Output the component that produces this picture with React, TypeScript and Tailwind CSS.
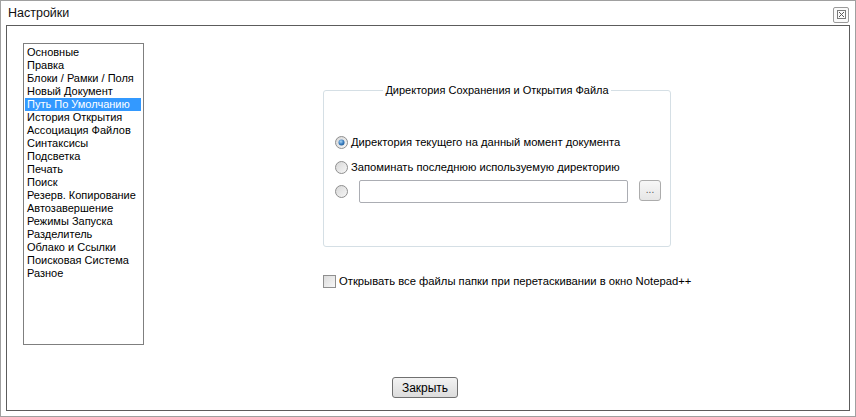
import React from "react";

const items = [
  "Основные",
  "Правка",
  "Блоки / Рамки / Поля",
  "Новый Документ",
  "Путь По Умолчанию",
  "История Открытия",
  "Ассоциация Файлов",
  "Синтаксисы",
  "Подсветка",
  "Печать",
  "Поиск",
  "Резерв. Копирование",
  "Автозавершение",
  "Режимы Запуска",
  "Разделитель",
  "Облако и Ссылки",
  "Поисковая Система",
  "Разное",
];

function Radio({ checked }: { checked?: boolean }) {
  return (
    <svg width="13" height="13" viewBox="0 0 13 13" className="shrink-0">
      <defs>
        <linearGradient id={checked ? "rgc" : "rgu"} x1="0" y1="0" x2="1" y2="1">
          <stop offset="0" stopColor="#d6d6d6" />
          <stop offset="1" stopColor="#f8f8f8" />
        </linearGradient>
        <radialGradient id="dot" cx="0.4" cy="0.35" r="0.7">
          <stop offset="0" stopColor="#a9d6f5" />
          <stop offset="0.6" stopColor="#3b7ec0" />
          <stop offset="1" stopColor="#1d5a96" />
        </radialGradient>
      </defs>
      <circle cx="6.5" cy="6.5" r="6" fill={`url(#${checked ? "rgc" : "rgu"})`} stroke="#8f8f8f" strokeWidth="1" />
      {checked && <circle cx="6.5" cy="6.5" r="3" fill="url(#dot)" />}
    </svg>
  );
}

export default function App() {
  const font = { fontFamily: '"Liberation Sans", Arial, sans-serif' };
  return (
    <div
      className="w-[856px] h-[417px] border border-[#a0a0a0] bg-white flex flex-col px-[5px] pb-[5px] text-black overflow-hidden"
      style={font}
    >
      {/* title bar */}
      <div className="h-[24px] flex items-center justify-between pl-[2px] shrink-0">
        <span className="text-[12.5px] leading-none mt-[1px] text-[#111]">Настройки</span>
        <div className="w-[16px] h-[16px] mt-[3px] mr-[1px] border border-[#9a9a9a] rounded-[2px] flex items-center justify-center bg-[#fafafa]">
          <svg width="9" height="9" viewBox="0 0 9 9">
            <rect x="0.5" y="0.5" width="8" height="8" fill="none" stroke="#7a7a7a" strokeWidth="1" />
            <path d="M2 2 L7 7 M7 2 L2 7" stroke="#5a5a5a" strokeWidth="1" />
          </svg>
        </div>
      </div>

      {/* content */}
      <div className="flex-1 border border-[#5c5c5c] bg-white flex flex-col">
        <div className="flex">
          {/* list box */}
          <div className="ml-[16px] mt-[17px] w-[121px] h-[302px] border border-[#7f7f7f] pt-[2px] px-[1px] shrink-0">
            {items.map((it, i) => (
              <div
                key={it}
                className={
                  "h-[13px] leading-[13px] text-[11px] pl-[2px] mr-[1px] whitespace-nowrap " +
                  (i === 4 ? "bg-[#3399ff] text-white" : "")
                }
              >
                {it}
              </div>
            ))}
          </div>

          {/* right column */}
          <div className="ml-[179px] flex flex-col">
            <div className="mt-[64px] w-[348px] h-[157px] border border-[#d5dfe5] rounded-[3px] relative">
              <div className="absolute -top-[8px] left-0 right-0 flex justify-center">
                <span className="bg-white px-[2px] text-[11px] leading-[14px]">
                  Директория Сохранения и Открытия Файла
                </span>
              </div>
              <div className="pt-[45px] pl-[11px] flex flex-col">
                <div className="flex items-center h-[13px] gap-[3px]">
                  <Radio checked />
                  <span className="text-[11.2px] leading-none">Директория текущего на данный момент документа</span>
                </div>
                <div className="flex items-center h-[13px] gap-[3px] mt-[12px]">
                  <Radio />
                  <span className="text-[11.2px] leading-none">Запоминать последнюю используемую директорию</span>
                </div>
                <div className="flex items-center mt-[6px] h-[23px]">
                  <Radio />
                  <div className="ml-[11px] w-[269px] h-[23px] border border-[#abadb3] rounded-[2px] bg-white" />
                  <div className="ml-[11px] -mt-[2px] w-[22px] h-[21px] border border-[#acacac] rounded-[3px] bg-gradient-to-b from-[#f7f7f7] to-[#e6e6e6] flex items-center justify-center text-[10px] text-[#555] leading-none pb-[2px]">
                    ...
                  </div>
                </div>
              </div>
            </div>

            <div className="mt-[28px] flex items-center gap-[3px]">
              <div className="w-[13px] h-[13px] border border-[#8f8f8f] bg-gradient-to-br from-[#dcdcdc] to-[#f7f7f7] shrink-0" />
              <span className="text-[11.25px] leading-none">
                Открывать все файлы папки при перетаскивании в окно Notepad++
              </span>
            </div>
          </div>
        </div>

        <div className="mt-[32px] ml-[385px]">
          <div className="w-[66px] h-[21px] border border-[#707070] rounded-[3px] bg-gradient-to-b from-[#f3f3f3] to-[#dcdcdc] flex items-center justify-center text-[12px] leading-none">
            Закрыть
          </div>
        </div>
      </div>
    </div>
  );
}
